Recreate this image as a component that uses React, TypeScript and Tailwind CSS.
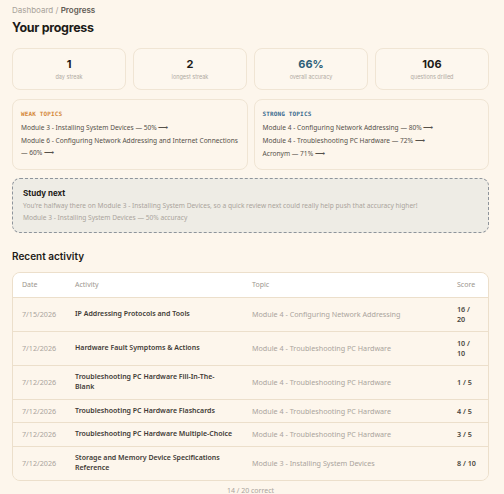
const stats = [
  { value: '1', label: 'day streak', accent: false },
  { value: '2', label: 'longest streak', accent: false },
  { value: '66%', label: 'overall accuracy', accent: true },
  { value: '106', label: 'questions drilled', accent: false },
]

const weak = [
  'Module 3 - Installing System Devices — 50% ⟶',
  'Module 6 - Configuring Network Addressing and Internet Connections — 60% ⟶',
]

const strong = [
  'Module 4 - Configuring Network Addressing — 80% ⟶',
  'Module 4 - Troubleshooting PC Hardware — 72% ⟶',
  'Acronym — 71% ⟶',
]

const rows = [
  { date: '7/15/2026', activity: 'IP Addressing Protocols and Tools', topic: 'Module 4 - Configuring Network Addressing', score: '16 / 20' },
  { date: '7/12/2026', activity: 'Hardware Fault Symptoms & Actions', topic: 'Module 4 - Troubleshooting PC Hardware', score: '10 / 10' },
  { date: '7/12/2026', activity: 'Troubleshooting PC Hardware Fill-In-The-Blank', topic: 'Module 4 - Troubleshooting PC Hardware', score: '1 / 5' },
  { date: '7/12/2026', activity: 'Troubleshooting PC Hardware Flashcards', topic: 'Module 4 - Troubleshooting PC Hardware', score: '4 / 5' },
  { date: '7/12/2026', activity: 'Troubleshooting PC Hardware Multiple-Choice', topic: 'Module 4 - Troubleshooting PC Hardware', score: '3 / 5' },
  { date: '7/12/2026', activity: 'Storage and Memory Device Specifications Reference', topic: 'Module 3 - Installing System Devices', score: '8 / 10' },
]

const body = "font-['Noto_Sans',sans-serif]"
const head = "font-['Inter',sans-serif]"
const mono = "font-['DejaVu_Sans_Mono',monospace]"

function TopicCard({ title, color, items }: { title: string; color: string; items: string[] }) {
  return (
    <div className="rounded-lg border border-[#f0e5d4] bg-[#fdf6ec] px-[8px] pt-[9px] pb-[9px]">
      <div className={`${mono} text-[6px] font-bold leading-[10px] tracking-wide ${color}`}>{title}</div>
      <div className="mt-[3px] flex flex-col gap-[1px]">
        {items.map((t) => (
          <div key={t} className={`${body} text-[6.6px] leading-[12px] text-[#555049]`}>
            {t}
          </div>
        ))}
      </div>
    </div>
  )
}

export default function App() {
  return (
    <div className={`min-h-screen bg-[#fdf6ec] pl-3 pr-[15px] pt-[5px] ${body}`}>
      <div className={`${head} text-[8px] leading-[10px] text-[#a8a29a]`}>
        Dashboard / <span className="font-semibold text-[#5f5a54]">Progress</span>
      </div>
      <h1 className={`${head} mt-[4px] text-[12.5px] font-bold leading-[18px] tracking-tight text-[#1d1b18]`}>
        Your progress
      </h1>

      <div className="mt-[11px] grid grid-cols-4 gap-[7px]">
        {stats.map((s) => (
          <div key={s.label} className="flex h-[42px] flex-col items-center justify-center rounded-lg border border-[#f0e5d4] bg-[#fdf7ee]">
            <div className={`${head} text-[11px] font-bold leading-[14px] ${s.accent ? 'text-[#2e5f78]' : 'text-[#1d1b18]'}`}>
              {s.value}
            </div>
            <div className={`${head} mt-[2px] text-[5.5px] leading-[8px] text-[#b0aaa2]`}>{s.label}</div>
          </div>
        ))}
      </div>

      <div className="mt-[9px] grid grid-cols-2 gap-[6px]">
        <TopicCard title="WEAK TOPICS" color="text-[#d4883a]" items={weak} />
        <TopicCard title="STRONG TOPICS" color="text-[#3a6b8f]" items={strong} />
      </div>

      <div className="mt-[8px] rounded-lg border border-dashed border-[#8e949b] bg-[#eeece5] px-[10px] pt-[8px] pb-[9px]">
        <div className={`${head} text-[8px] font-bold leading-[12px] text-[#1d1b18]`}>Study next</div>
        <div className="mt-[1px] text-[6.6px] leading-[11px] text-[#aaa49c]">
          You're halfway there on Module 3 - Installing System Devices, so a quick review next could really help push that accuracy higher!
        </div>
        <div className="mt-[1px] text-[6.6px] leading-[11px] text-[#aaa49c]">
          Module 3 - Installing System Devices — 50% accuracy
        </div>
      </div>

      <h2 className={`${head} mt-[16px] text-[10px] font-semibold leading-[14px] text-[#1d1b18]`}>Recent activity</h2>

      <div className="mt-[9px] overflow-hidden rounded-lg border border-[#ecdfcb]">
        <table className="w-full table-fixed border-collapse text-left">
          <colgroup>
            <col className="w-[52px]" />
            <col className="w-[177px]" />
            <col className="w-[205px]" />
            <col />
          </colgroup>
          <thead className="bg-white">
            <tr className="h-[24px] text-[7px] text-[#9c968e]">
              <th className="pl-[9px] font-normal">Date</th>
              <th className="px-[10px] font-normal">Activity</th>
              <th className="px-[10px] font-normal">Topic</th>
              <th className="pl-[10px] font-normal">Score</th>
            </tr>
          </thead>
          <tbody className="bg-[#fdf6ec]">
            {rows.map((r, i) => (
              <tr key={i} className="border-t border-[#ecdfcb] text-[7.2px] leading-[10.5px]">
                <td className="whitespace-nowrap py-[6px] pl-[9px] text-[#aaa49c]">{r.date}</td>
                <td className="py-[6px] pr-[9px] pl-[10px] text-[7px] font-semibold text-[#3f3b36]">{r.activity}</td>
                <td className="px-[10px] py-[6px] text-[#aaa49c]">{r.topic}</td>
                <td className="py-[6px] pr-[9px] pl-[10px] font-semibold text-[#4a4640]">{r.score}</td>
              </tr>
            ))}
          </tbody>
        </table>
      </div>
      <div className="pt-[5px] pb-4 text-center text-[7px] leading-[10px] text-[#aaa49c]">14 / 20 correct</div>
    </div>
  )
}
